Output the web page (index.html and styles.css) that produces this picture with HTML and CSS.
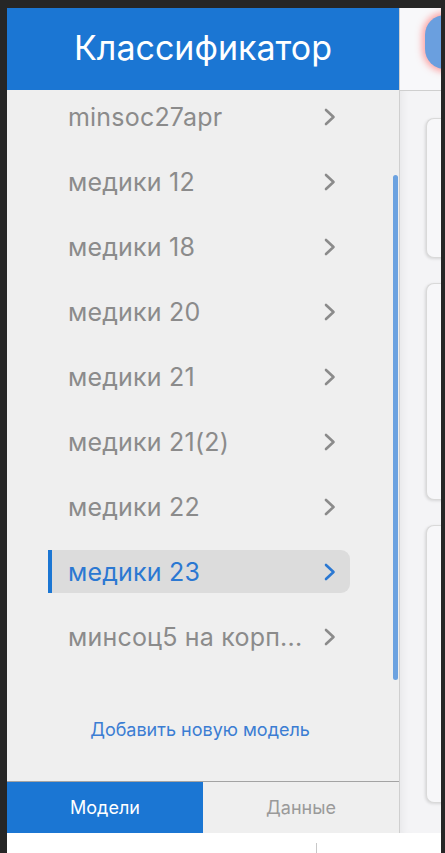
FILE: index.html
```html
<!DOCTYPE html>
<html lang="ru">
<head>
<meta charset="utf-8">
<title>Классификатор</title>
<link rel="stylesheet" href="styles.css">
</head>
<body>
<div class="app">
  <div class="main">
    <aside class="sidebar">
      <header class="sb-header">Классификатор</header>
      <div class="list-wrap">
        <ul class="list">
          <li class="item"><span class="label">minsoc27apr</span><svg class="chev" viewBox="0 0 12 18"><path d="M2 2 L9.5 9 L2 16"/></svg></li>
          <li class="item"><span class="label">медики 12</span><svg class="chev" viewBox="0 0 12 18"><path d="M2 2 L9.5 9 L2 16"/></svg></li>
          <li class="item"><span class="label">медики 18</span><svg class="chev" viewBox="0 0 12 18"><path d="M2 2 L9.5 9 L2 16"/></svg></li>
          <li class="item"><span class="label">медики 20</span><svg class="chev" viewBox="0 0 12 18"><path d="M2 2 L9.5 9 L2 16"/></svg></li>
          <li class="item"><span class="label">медики 21</span><svg class="chev" viewBox="0 0 12 18"><path d="M2 2 L9.5 9 L2 16"/></svg></li>
          <li class="item"><span class="label">медики 21(2)</span><svg class="chev" viewBox="0 0 12 18"><path d="M2 2 L9.5 9 L2 16"/></svg></li>
          <li class="item"><span class="label">медики 22</span><svg class="chev" viewBox="0 0 12 18"><path d="M2 2 L9.5 9 L2 16"/></svg></li>
          <li class="item active"><span class="label">медики 23</span><svg class="chev" viewBox="0 0 12 18"><path d="M2 2 L9.5 9 L2 16"/></svg></li>
          <li class="item"><span class="label">минсоц5 на корп...</span><svg class="chev" viewBox="0 0 12 18"><path d="M2 2 L9.5 9 L2 16"/></svg></li>
        </ul>
        <a class="add-link">Добавить новую модель</a>
        <div class="scrollbar"></div>
      </div>
      <nav class="tabs">
        <div class="tab tab-active">Модели</div>
        <div class="tab">Данные</div>
      </nav>
    </aside>
    <section class="content">
      <div class="content-head"><div class="fab"></div></div>
      <div class="cards">
        <div class="card card1"></div>
        <div class="card card2"></div>
        <div class="card card3"></div>
      </div>
    </section>
  </div>
  <footer class="footer"><div class="footer-left"></div><div class="footer-right"></div></footer>
</div>
</body>
</html>
```
FILE: styles.css
```css
* { box-sizing: border-box; }
html, body { margin: 0; padding: 0; }
body {
  background: #262626;
  width: 445px;
  height: 853px;
  overflow: hidden;
  font-family: Inter, "Noto Sans", sans-serif;
}
.app {
  margin: 8px 4px 0 7px;
  height: 845px;
  display: flex;
  flex-direction: column;
}
.main {
  display: flex;
  height: 825px;
}
.sidebar {
  width: 392px;
  display: flex;
  flex-direction: column;
  background: #efefef;
}
.sb-header {
  height: 82px;
  background: #1b76d3;
  color: #fff;
  font-size: 34px;
  display: flex;
  align-items: center;
  justify-content: center;
  padding-bottom: 4px;
}
.list-wrap {
  flex: 1;
  position: relative;
  display: flex;
  flex-direction: column;
  padding-top: 5px;
}
.list {
  list-style: none;
  margin: 0;
  padding: 0 0 0 41px;
}
.item {
  width: 302px;
  height: 43px;
  margin-bottom: 22px;
  display: flex;
  align-items: center;
  padding: 0 14px 0 20px;
  border-radius: 0 9px 9px 0;
  color: #8b8b8b;
  font-size: 25px;
  letter-spacing: 0.2px;
}
.label {
  flex: 1;
  white-space: nowrap;
  margin-right: 12px;
}
.chev {
  width: 12px;
  height: 18px;
  flex: none;
}
.chev path {
  fill: none;
  stroke: #8b8b8b;
  stroke-width: 2.6;
  stroke-linecap: round;
  stroke-linejoin: round;
}
.item.active {
  background: #dcdcdc;
  border-left: 4px solid #1b76d3;
  padding-left: 16px;
  color: #2b78d2;
}
.item.active .chev path { stroke: #2b78d2; }
.add-link {
  margin-top: 39px;
  text-align: center;
  color: #3b7dd3;
  font-size: 18px;
  padding-right: 6px;
}
.scrollbar {
  position: absolute;
  right: 1px;
  top: 85px;
  width: 5px;
  height: 505px;
  background: #6ca2e0;
  border-radius: 3px;
}
.tabs {
  height: 52px;
  border-top: 1px solid #a3a3a3;
  display: flex;
}
.tab {
  flex: 1;
  display: flex;
  align-items: center;
  justify-content: center;
  font-size: 18px;
  color: #9a9a9a;
  background: #efefef;
}
.tab-active {
  background: #1b76d3;
  color: #fff;
}
.content {
  flex: 1;
  display: flex;
  flex-direction: column;
  background: #f4f4f6;
  border-left: 1px solid #cfcfcf;
  overflow: hidden;
}
.content-head {
  height: 83px;
  background: #f8f8fa;
  border-bottom: 1px solid #cfcfcf;
  padding-top: 7px;
  padding-left: 25px;
}
.fab {
  width: 44px;
  height: 54px;
  border-radius: 20px;
  background: #6a9fdf;
  box-shadow: 0 0 6px 3px rgba(255, 90, 90, 0.5);
}
.cards {
  flex: 1;
  padding: 27px 0 0 26px;
  display: flex;
  flex-direction: column;
  gap: 25px;
  box-shadow: inset 8px 0 8px -6px rgba(0,0,0,0.06);
}
.card {
  width: 30px;
  background: #f7f7f9;
  border: 1px solid #d9d9d9;
  border-right: none;
  border-radius: 8px 0 0 8px;
  box-shadow: -1px 1px 3px rgba(0,0,0,0.12);
}
.card1 { height: 140px; }
.card2 { height: 217px; }
.card3 { height: 278px; }
.footer {
  height: 20px;
  background: #fff;
  display: flex;
}
.footer-left {
  width: 309px;
}
.footer-right {
  flex: 1;
  border-left: 1px solid #c8c8c8;
  margin-top: 10px;
}
```
